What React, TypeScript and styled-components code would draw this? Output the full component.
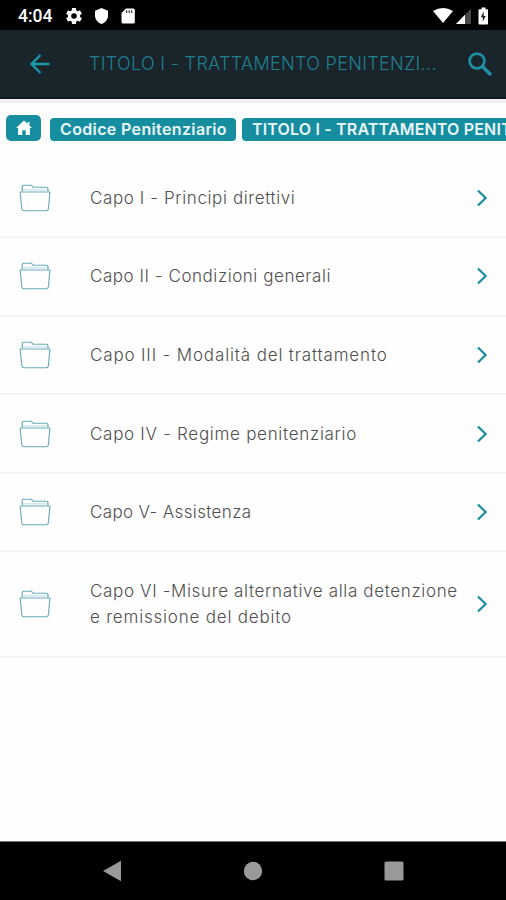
import React from 'react';
import styled, { createGlobalStyle } from 'styled-components';

const teal = '#168ea0';

const GlobalStyle = createGlobalStyle`
  * { box-sizing: border-box; }
  body { margin: 0; background: #fff; font-family: Inter, "Open Sans", sans-serif; }
  svg { display: block; flex: none; }
`;

const Screen = styled.div`
  display: flex;
  flex-direction: column;
  width: 506px;
  height: 900px;
  overflow: hidden;
  background: #fefefe;
`;

const StatusBar = styled.div`
  display: flex;
  align-items: center;
  justify-content: space-between;
  flex: none;
  height: 30px;
  padding: 1px 15px 0 18px;
  background: #000;
`;

const StatusGroup = styled.div<{ $gap: number }>`
  display: flex;
  align-items: center;
  gap: ${(p) => p.$gap}px;
`;

const Clock = styled.span`
  width: 34px;
  margin-right: 2px;
  color: #fff;
  font: 500 17.5px/22px Roboto, sans-serif;
  white-space: nowrap;
`;

const AppBar = styled.header`
  display: flex;
  align-items: center;
  flex: none;
  height: 69px;
  padding: 1px 13px 0 29px;
  background: #19252b;
  border-bottom: 2px solid #11181c;
`;

const Title = styled.h1`
  flex: 1;
  margin: 0 0 0 38px;
  color: #217f8f;
  font-size: 18px;
  font-weight: 300;
  line-height: 24px;
  letter-spacing: 0.32px;
  white-space: nowrap;
`;

const Breadcrumbs = styled.nav`
  display: flex;
  align-items: flex-end;
  flex: none;
  height: 42px;
  padding: 0 0 0 6px;
  border-top: 4px solid #efefef;
  overflow: hidden;
`;

const HomeChip = styled.div`
  display: flex;
  align-items: center;
  justify-content: center;
  flex: none;
  width: 35px;
  height: 26px;
  margin-right: 9px;
  border-radius: 5px;
  background: ${teal};
`;

const Chip = styled.div<{ $width: number; $spacing: number }>`
  flex: none;
  width: ${(p) => p.$width}px;
  height: 23px;
  margin-right: 6px;
  padding-left: 10px;
  border-radius: 4px;
  background: ${teal};
  color: #e9f7f9;
  font-size: 16px;
  font-weight: 600;
  line-height: 23px;
  letter-spacing: ${(p) => p.$spacing}px;
  white-space: nowrap;
`;

const List = styled.ul`
  flex: 1;
  margin: 0;
  padding: 18.5px 0 0;
  list-style: none;
`;

const Row = styled.li<{ $tall?: boolean }>`
  display: flex;
  align-items: center;
  height: ${(p) => (p.$tall ? 105.2 : 78.6)}px;
  padding: 0 17px 0 19px;
  border-bottom: 2px solid #f4f4f4;
`;

const Label = styled.div`
  flex: 1;
  margin-left: 39px;
  color: #505050;
  font-size: 17px;
  font-weight: 300;
  line-height: 26px;
`;

const Line = styled.span<{ $spacing: number }>`
  display: block;
  width: max-content;
  letter-spacing: ${(p) => p.$spacing}px;
  white-space: nowrap;
`;

const NavBar = styled.footer`
  display: flex;
  align-items: center;
  justify-content: space-between;
  flex: none;
  height: 59px;
  padding: 0 102px;
  border-top: 1px solid #777;
  background: #000;
`;

const Folder = () => (
  <svg width="32" height="28" viewBox="0 0 32 28" fill="none" stroke="#69acb8" strokeWidth="1.15" strokeLinejoin="round">
    <path d="M3.2 7V2.8Q3.2 1.2 4.8 1.2H12.2L14 3.2H27.2Q29 3.2 29 5V7" />
    <path d="M3.2 8V5.8H29V8" opacity=".35" />
    <path d="M1.1 8H30.9L29.4 24.7Q29.2 26.7 27.2 26.7H5Q3 26.7 2.8 24.7Z" />
  </svg>
);

const Chevron = () => (
  <svg width="14" height="18" viewBox="0 0 14 18" fill="none" stroke={teal} strokeWidth="2.2">
    <path d="M3 1.5L10.6 9L3 16.5" />
  </svg>
);

const rows: { text: string; spacing: number }[][] = [
  [{ text: 'Capo I - Principi direttivi', spacing: 0.61 }],
  [{ text: 'Capo II - Condizioni generali', spacing: 0.55 }],
  [{ text: 'Capo III - Modalità del trattamento', spacing: 0.85 }],
  [{ text: 'Capo IV - Regime penitenziario', spacing: 0.71 }],
  [{ text: 'Capo V- Assistenza', spacing: 0.36 }],
  [
    { text: 'Capo VI -Misure alternative alla detenzione', spacing: 0.65 },
    { text: 'e remissione del debito', spacing: 0.8 },
  ],
];

export default function App() {
  return (
    <Screen>
      <GlobalStyle />
      <StatusBar>
        <StatusGroup $gap={12}>
          <Clock>4:04</Clock>
          <svg width="16" height="16" viewBox="2 2 20 20" fill="#fff">
            <path d="M19.43 12.98c.04-.32.07-.64.07-.98s-.03-.66-.07-.98l2.11-1.65c.19-.15.24-.42.12-.64l-2-3.46c-.12-.22-.39-.3-.61-.22l-2.49 1c-.52-.4-1.08-.73-1.69-.98l-.38-2.65A.49.49 0 0014 2h-4c-.25 0-.46.18-.49.42l-.38 2.65c-.61.25-1.17.59-1.69.98l-2.49-1c-.23-.09-.49 0-.61.22l-2 3.46c-.13.22-.07.49.12.64l2.11 1.65c-.04.32-.07.65-.07.98s.03.66.07.98l-2.11 1.65c-.19.15-.24.42-.12.64l2 3.46c.12.22.39.3.61.22l2.49-1c.52.4 1.08.73 1.69.98l.38 2.65c.03.24.24.42.49.42h4c.25 0 .46-.18.49-.42l.38-2.65c.61-.25 1.17-.59 1.69-.98l2.49 1c.23.09.49 0 .61-.22l2-3.46c.12-.22.07-.49-.12-.64l-2.11-1.65zM12 15.5a3.5 3.5 0 110-7 3.5 3.5 0 010 7z" />
          </svg>
          <svg width="15" height="16" viewBox="0 0 15 16" fill="#fff">
            <path d="M7.5 0L14 2.7V7.5C14 11.5 11.3 14.7 7.5 16C3.7 14.7 1 11.5 1 7.5V2.7Z" />
          </svg>
          <svg width="14" height="16" viewBox="0 0 14 16">
            <path d="M5 .5H12.3Q13.8.5 13.8 2V14Q13.8 15.5 12.3 15.5H2Q.5 15.5.5 14V5Z" fill="#fff" />
            <path d="M5.7 2.2V5M8.2 2.2V5M10.7 2.2V5" stroke="#333" strokeWidth="1.2" />
          </svg>
        </StatusGroup>
        <StatusGroup $gap={3}>
          <svg width="20" height="17" viewBox="0 0 20 17" fill="#fff">
            <path d="M0 4Q10-2.2 20 4L10 16Z" />
          </svg>
          <svg width="15" height="16" viewBox="0 0 15 16">
            <path d="M15 .5V16H0Z" fill="#484848" />
            <path d="M9 6.7V16H0Z" fill="#fff" />
          </svg>
          <svg width="17" height="18" viewBox="0 0 17 18">
            <path d="M7.5 .5H11.5V2.3H13Q14 2.3 14 3.3V16.5Q14 17.5 13 17.5H5.5Q4.5 17.5 4.5 16.5V3.3Q4.5 2.3 5.5 2.3H7.5Z" fill="#fff" />
            <path d="M9.7 4.5L6.8 10.3H8.8V14.8L11.7 8.9H9.7Z" fill="#222" />
          </svg>
        </StatusGroup>
      </StatusBar>

      <AppBar>
        <svg width="22" height="22" viewBox="0 0 22 22" fill="none" stroke="#1b9aac" strokeWidth="2.3">
          <path d="M20.5 11H3M11.5 2L2.5 11L11.5 20" />
        </svg>
        <Title>TITOLO I - TRATTAMENTO PENITENZI...</Title>
        <svg width="26" height="26" viewBox="0 0 26 26" fill="none" stroke="#1e90a1" strokeWidth="2.7">
          <circle cx="10" cy="10" r="7.4" />
          <path d="M15.2 15.2L24 24" strokeWidth="3.4" />
        </svg>
      </AppBar>

      <Breadcrumbs>
        <HomeChip>
          <svg width="16" height="16" viewBox="0 0 16 16" fill="#fff">
            <path d="M8 .5L11.5 3.8V2H13.5V5.7L16 8.1H13.9V15H9.7V10.2H6.3V15H2.1V8.1H0Z" />
          </svg>
        </HomeChip>
        <Chip $width={186} $spacing={0.36}>Codice Penitenziario</Chip>
        <Chip $width={360} $spacing={0.17}>TITOLO I - TRATTAMENTO PENITENZIARIO</Chip>
      </Breadcrumbs>

      <List>
        {rows.map((lines) => (
          <Row key={lines[0].text} $tall={lines.length > 1}>
            <Folder />
            <Label>
              {lines.map((line) => (
                <Line key={line.text} $spacing={line.spacing}>{line.text}</Line>
              ))}
            </Label>
            <Chevron />
          </Row>
        ))}
      </List>

      <NavBar>
        <svg width="20" height="22" viewBox="0 0 20 22" fill="#999">
          <path d="M1 11L19 .8V21.2Z" />
        </svg>
        <svg width="20" height="20" viewBox="0 0 20 20" fill="#999">
          <circle cx="10" cy="10" r="9.2" />
        </svg>
        <svg width="20" height="20" viewBox="0 0 20 20" fill="#999">
          <rect x=".5" y=".5" width="19" height="19" rx="1.5" />
        </svg>
      </NavBar>
    </Screen>
  );
}
